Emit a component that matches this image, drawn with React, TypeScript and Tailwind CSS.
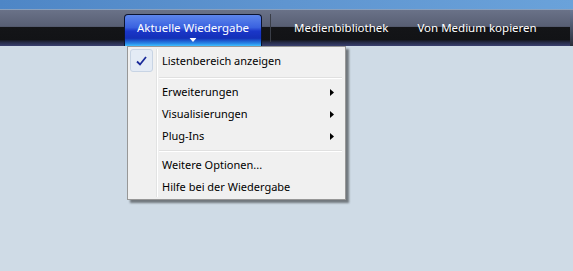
import React from "react";

const font = { fontFamily: '"Noto Sans", "Open Sans", sans-serif' };

function Arrow() {
  return (
    <svg width="4" height="7" viewBox="0 0 4 7" className="block">
      <path d="M0 0 L4 3.5 L0 7 Z" fill="#000" />
    </svg>
  );
}

function Item({ label, sub }: { label: string; sub?: boolean }) {
  return (
    <div className="flex h-[22px] items-center pl-[34px] pr-[11px]">
      <span className="flex-1 text-[11px] text-black">{label}</span>
      {sub && <Arrow />}
    </div>
  );
}

function Sep() {
  return (
    <div className="flex h-[7px] items-center pl-[31px] pr-[3px]">
      <div className="h-[2px] w-full border-t border-[#e0e0e0] bg-white" />
    </div>
  );
}

export default function App() {
  return (
    <div className="relative h-[271px] w-[573px] overflow-hidden bg-[#cfdbe6]" style={font}>
      <div className="h-[9px] bg-gradient-to-r from-[#4e86c6] via-[#5f95d0] to-[#6aa2da]" />
      <div className="h-[1px] bg-[#8aa0bc]" />
      <div className="relative flex h-[36px] items-end bg-[linear-gradient(to_bottom,#6a7288_0%,#585f74_45%,#4a5062_47%,#141518_48%,#121316_82%,#262b48_90%,#3a4070_100%)] pl-[124px]">
        <div className="relative flex h-[32px] w-[138px] flex-col items-center rounded-t-[4px] border border-b-0 border-[#0c1430] bg-[linear-gradient(to_bottom,#5d86ec_0%,#3a62e0_40%,#1a36c8_52%,#1430b8_75%,#2a8ae8_92%,#40c0ff_100%)] pt-[6px]">
          <span className="text-[11.5px] leading-[14px] text-white">Aktuelle Wiedergabe</span>
          <svg width="7" height="4" viewBox="0 0 7 4" className="absolute bottom-[4px] left-1/2 -translate-x-1/2">
            <path d="M0 0 L7 0 L3.5 4 Z" fill="#ffffff" />
          </svg>
        </div>
        <div className="ml-[8px] mb-[4px] h-[28px] w-[1px] bg-[#3a3e48]" />
        <div className="flex h-full items-center">
          <span className="ml-[23px] text-[11.5px] text-white">Medienbibliothek</span>
          <span className="ml-[29px] text-[11.5px] text-white">Von Medium kopieren</span>
        </div>
        <div className="absolute right-0 top-0 h-full w-[3px] bg-[linear-gradient(to_bottom,#6a7896,#2a2e3a)]" />
      </div>

      <div className="absolute left-[127px] top-[46px] w-[219px] border border-[#979797] bg-[#f0f0f0] py-[1px] shadow-[3px_3px_2px_rgba(0,0,0,0.45)]">
        <div className="absolute bottom-[2px] left-[28px] top-[2px] w-[1px] bg-[#e2e3e3]" />
        <div className="absolute bottom-[2px] left-[29px] top-[2px] w-[1px] bg-white" />
        <div className="relative flex h-[26px] items-center pl-[34px] pr-[11px]">
          <div className="absolute left-[2px] top-[1px] flex h-[23px] w-[23px] items-center justify-center rounded-[3px] border border-[#c8d4e4] bg-[#e4ebf5]">
            <svg width="11" height="10" viewBox="0 0 11 10">
              <path d="M1 5.5 L4 8.5 L10 1" stroke="#1a2a9a" strokeWidth="1.8" fill="none" />
            </svg>
          </div>
          <span className="mt-[1px] flex-1 text-[11px] text-black">Listenbereich anzeigen</span>
        </div>
        <Sep />
        <Item label="Erweiterungen" sub />
        <Item label="Visualisierungen" sub />
        <Item label="Plug-Ins" sub />
        <Sep />
        <Item label="Weitere Optionen..." />
        <Item label="Hilfe bei der Wiedergabe" />
      </div>
    </div>
  );
}
